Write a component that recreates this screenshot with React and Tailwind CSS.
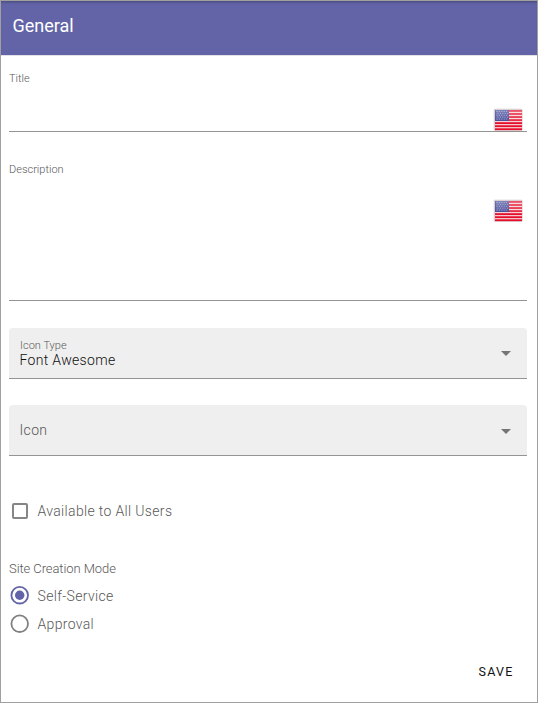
function Flag() {
  const stripes = [0, 1, 2, 3, 4, 5, 6];
  const stars = [0, 1, 2, 3, 4];
  return (
    <svg className="block shrink-0" width="30" height="24" viewBox="0 0 30 24" aria-label="English">
      <defs>
        <linearGradient id="canton" x1="0" y1="0" x2="1" y2="1">
          <stop offset="0" stopColor="#5056a4" />
          <stop offset="1" stopColor="#34398c" />
        </linearGradient>
        <linearGradient id="gloss" x1="0" y1="0" x2="0" y2="1">
          <stop offset="0" stopColor="#fff" stopOpacity=".3" />
          <stop offset="1" stopColor="#fff" stopOpacity=".12" />
        </linearGradient>
      </defs>
      <rect x=".5" y=".5" width="29" height="22.5" rx="1.5" fill="#000" opacity=".1" />
      <rect x="1" y="1" width="28.5" height="21.5" rx="1" fill="#d9cfd3" />
      <rect x="2" y="2" width="27" height="20" fill="#f4d3d8" />
      {stripes.map((i) => (
        <rect key={i} x="2" y={2 + i * 3.05} width="27" height="1.85" fill="#e50f2c" />
      ))}
      <rect x="2" y="2" width="14" height="11" fill="url(#canton)" />
      {stars.map((r) =>
        stars.map((c) => (
          <rect key={`${r}-${c}`} x={3.5 + c * 2.4 + (r % 2)} y={3 + r * 1.9} width="1" height="1" fill="#d5d8f0" opacity=".6" />
        ))
      )}
      <path d="M2.5 2v10.5H16" fill="none" stroke="#30398c" strokeWidth="1" />
      <rect x="2" y="2" width="27" height="11" fill="url(#gloss)" />
    </svg>
  );
}

function Arrow() {
  return (
    <svg className="block" width="10" height="5" viewBox="0 0 10 5">
      <path d="M0 0h10L5 5z" fill="#757575" />
    </svg>
  );
}

function Radio({ checked, children }) {
  return (
    <label className="flex h-[28px] items-center">
      <svg className="mr-[8px] ml-px block" width="20" height="20" viewBox="0 0 20 20">
        <circle cx="9.7" cy={checked ? 9.2 : 9.7} r="8.3" fill="none" strokeWidth="1.8" stroke={checked ? "#6264a7" : "#808080"} />
        {checked && <circle cx="9.7" cy="9.2" r="4.7" fill="#6264a7" />}
      </svg>
      <span className="-ml-[0.5px] text-[14px] leading-[20px] tracking-[0.34px]">{children}</span>
    </label>
  );
}

export default function App() {
  return (
    <div className="flex h-[703px] w-[538px] flex-col border border-[#a0a0a0] bg-white font-['Roboto',sans-serif] font-light text-[#585858]">
      <header className="flex h-[55px] shrink-0 items-center border-b border-[#e0e0e6] bg-[#6264a7] pb-[4px] pl-[11.5px] shadow-[inset_0_3px_3px_-2px_rgba(0,0,0,0.3)]">
        <h1 className="text-[18px] leading-6 font-normal text-white">General</h1>
      </header>
      <main className="flex flex-col pr-[10px] pl-[8px]">
        <div className="flex h-[76px] flex-col border-b border-[#949494] pt-[16px]">
          <span className="h-[14px] text-[11px] leading-[14px]">Title</span>
          <div className="mt-[22px] flex justify-end pr-[4px]"><Flag /></div>
        </div>
        <div className="mt-[31px] flex h-[138px] flex-col border-b border-[#949494]">
          <span className="h-[14px] text-[11px] leading-[14px]">Description</span>
          <div className="mt-[22px] flex justify-end pr-[4px]"><Flag /></div>
        </div>
        <div className="mt-[27px] flex h-[51px] items-center justify-between rounded-t-[4px] border-b border-[#949494] bg-[#efefef] pr-[16px] pl-[11px]">
          <div className="flex flex-col">
            <span className="h-[14px] pt-px text-[11px] leading-[14px] tracking-[0.02px]">Icon Type</span>
            <span className="-ml-[0.5px] text-[14px] leading-[16px] tracking-[0.32px] text-[#101010]">Font Awesome</span>
          </div>
          <Arrow />
        </div>
        <div className="mt-[26px] flex h-[51px] items-center justify-between rounded-t-[4px] border-b border-[#949494] bg-[#efefef] pr-[16px] pl-[10.5px]">
          <span className="text-[14px] leading-[20px] tracking-[0.34px]">Icon</span>
          <span className="pt-[2px]"><Arrow /></span>
        </div>
        <label className="mt-[45px] flex h-[20px] items-center">
          <span className="mr-[9.5px] ml-[3px] h-[16px] w-[16px] rounded-[2px] border-2 border-[#868686]" />
          <span className="text-[14px] leading-[20px] tracking-[0.34px]">Available to All Users</span>
        </label>
        <span className="mt-[40px] h-[16px] text-[13px] leading-[16px] tracking-[-0.08px]">Site Creation Mode</span>
        <div className="mt-[5px] flex flex-col">
          <Radio checked>Self-Service</Radio>
          <Radio>Approval</Radio>
        </div>
        <div className="mt-[26px] flex justify-end pr-[13.5px]">
          <button className="text-[12.5px] leading-[16px] font-normal tracking-[1.2px] text-[#111]">SAVE</button>
        </div>
      </main>
    </div>
  );
}
